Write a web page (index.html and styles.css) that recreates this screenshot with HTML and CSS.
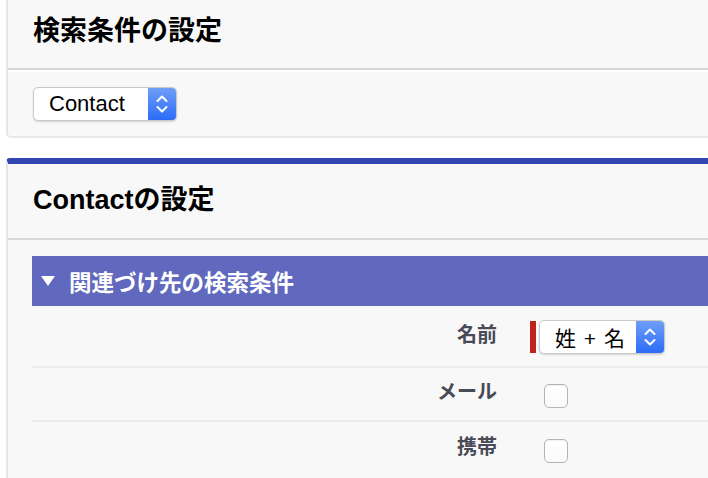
FILE: index.html
```html
<!DOCTYPE html>
<html lang="ja">
<head>
    <meta charset="UTF-8">
    <title>検索条件の設定</title>
    <link rel="stylesheet" href="styles.css">
</head>
<body>
    <div class="panel panel-first">
        <div class="panel-header">
            <h2>検索条件の設定</h2>
        </div>
        <div class="panel-body">
            <div class="select select-object">
                <span class="select-text">Contact</span>
                <span class="select-arrows">
                    <svg width="14" height="22" viewBox="0 0 14 22"><path d="M2.5 8 L7 3.5 L11.5 8 M2.5 14 L7 18.5 L11.5 14" fill="none" stroke="#fff" stroke-width="2" stroke-linecap="round" stroke-linejoin="round"/></svg>
                </span>
            </div>
        </div>
    </div>

    <div class="panel panel-second">
        <div class="panel-header">
            <h2>Contactの設定</h2>
        </div>
        <div class="panel-body section-body">
            <div class="section-bar">
                <span class="triangle"></span>
                <h3>関連づけ先の検索条件</h3>
            </div>

            <div class="row row-first">
                <div class="row-label">名前</div>
                <div class="row-value">
                    <span class="required"></span>
                    <div class="select select-name">
                        <span class="select-text">姓 + 名</span>
                        <span class="select-arrows">
                            <svg width="14" height="22" viewBox="0 0 14 22"><path d="M2.5 8 L7 3.5 L11.5 8 M2.5 14 L7 18.5 L11.5 14" fill="none" stroke="#fff" stroke-width="2" stroke-linecap="round" stroke-linejoin="round"/></svg>
                        </span>
                    </div>
                </div>
            </div>

            <div class="row">
                <div class="row-label">メール</div>
                <div class="row-value">
                    <input type="checkbox" class="check">
                </div>
            </div>

            <div class="row">
                <div class="row-label">携帯</div>
                <div class="row-value">
                    <input type="checkbox" class="check">
                </div>
            </div>
        </div>
    </div>
</body>
</html>
```

FILE: styles.css
```css
* {
    box-sizing: border-box;
}

body {
    margin: 0;
    padding: 0;
    background-color: #fff;
    font-family: "Liberation Sans", "Noto Sans CJK JP", sans-serif;
    overflow: hidden;
}

.panel {
    margin-left: 6px;
    margin-right: -20px;
    background-color: #f8f8f8;
    border-left: 2px solid #e6e6e6;
}

.panel-first {
    border-bottom: 2px solid #e8e8e8;
    border-bottom-left-radius: 5px;
}

.panel-first .panel-header {
    height: 70px;
    border-bottom: 2px solid #d8d8d8;
    padding-bottom: 12px;
}

.panel-first .panel-body {
    border-top: 2px solid #fff;
    height: 66px;
    padding: 15px 0 0 25px;
}

.panel-header {
    display: flex;
    align-items: center;
    padding-left: 25px;
}

.panel-header h2 {
    margin: 0;
    font-size: 27px;
    font-weight: bold;
    color: #000;
}

.panel-second {
    margin-top: 20px;
    border-top: 6px solid #3446b2;
    border-top-left-radius: 4px;
    height: 340px;
}

.panel-second .panel-header {
    height: 76px;
    border-bottom: 2px solid #d8d8d8;
    padding-bottom: 8px;
}

.section-body {
    padding: 16px 0 0 24px;
}

/* select boxes */
.select {
    display: flex;
    height: 34px;
    background-color: #fff;
    border: 1px solid #cacaca;
    border-radius: 5px;
    box-shadow: 0 1px 2px rgba(0, 0, 0, 0.15);
    overflow: hidden;
}

.select-object {
    width: 144px;
}

.select-name {
    width: 126px;
}

.select-text {
    flex: 1;
    display: flex;
    align-items: center;
    padding-left: 15px;
    font-size: 22px;
    color: #000;
}

.select-name .select-text {
    font-size: 21px;
    word-spacing: 2px;
}

.select-arrows {
    width: 28px;
    display: flex;
    align-items: center;
    justify-content: center;
    background: linear-gradient(#6f9ef8, #2c6cf6);
}

/* section bar */
.section-bar {
    display: flex;
    align-items: center;
    height: 50px;
    background-color: #6069bd;
    padding-left: 9px;
}

.triangle {
    width: 0;
    height: 0;
    border-left: 7px solid transparent;
    border-right: 7px solid transparent;
    border-top: 10px solid #fff;
    margin-right: 14px;
}

.section-bar h3 {
    margin: 0;
    font-size: 22.5px;
    font-weight: bold;
    color: #fff;
}

/* rows */
.row {
    display: flex;
    align-items: center;
    height: 54px;
    border-bottom: 2px solid #ebebeb;
}

.row:last-child {
    border-bottom: none;
}

.row-first {
    height: 62px;
    padding-top: 2px;
}

.row-label {
    width: 465px;
    text-align: right;
    padding-bottom: 8px;
    font-family: "Noto Sans CJK JP", sans-serif;
    font-size: 20px;
    font-weight: bold;
    color: #484a55;
}

.row-value {
    display: flex;
    align-items: center;
    margin-left: 33px;
}

.required {
    width: 6px;
    height: 32px;
    background-color: #c0221c;
    margin-right: 3px;
}

.check {
    appearance: none;
    -webkit-appearance: none;
    margin: 4px 0 0 14px;
    width: 24px;
    height: 24px;
    border: 1px solid #b4b4b4;
    border-radius: 5px;
    background: linear-gradient(#fff, #fafafa);
    box-shadow: inset 0 1px 1px rgba(0, 0, 0, 0.06);
}
```
